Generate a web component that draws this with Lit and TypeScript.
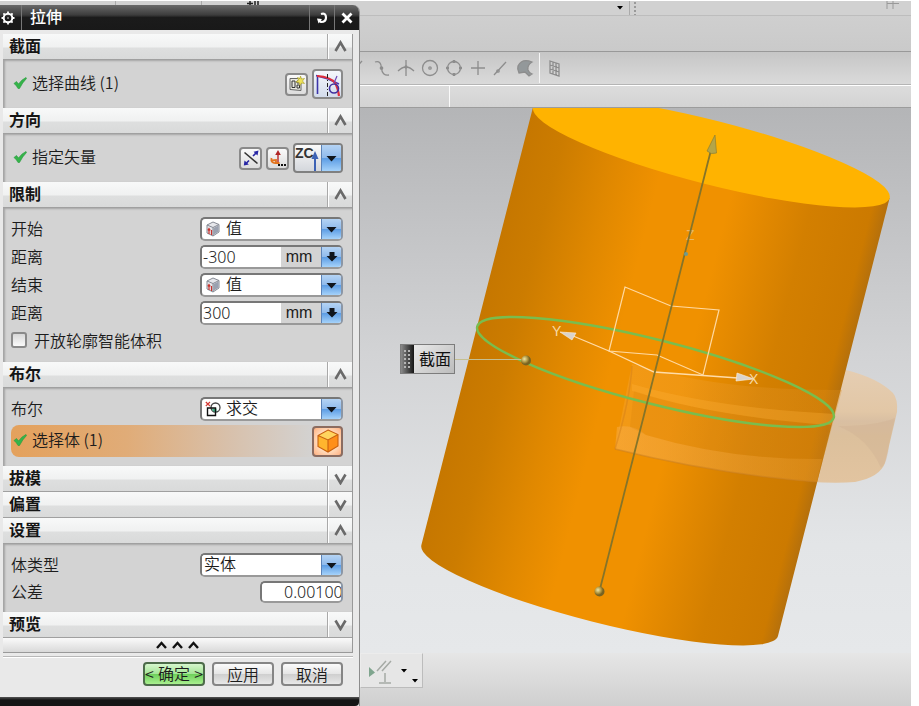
import { LitElement, html, svg, css, nothing, TemplateResult } from "lit";
import { customElement, property } from "lit/decorators.js";

const check = html`<svg class="check" viewBox="0 0 14 14" width="14" height="14" aria-hidden="true">
  <path d="M1 7.5 L3.5 5.5 L5.5 8 Q8.500 3.500 13 1.500 L13.500 2.500 Q9.500 6.500 6.500 12.500 L5 12.500 Q3.500 9.500 1 7.500Z" fill="#35b44a" stroke="#279a3b" stroke-width=".6"/>
</svg>`;

const cubeValue = html`<svg viewBox="0 0 16 16" width="16" height="16" aria-hidden="true">
  <path d="M8 1 L14 3.500 L14 11 L8 15 L2 12 L2 4Z" fill="#e6e7eb" stroke="#868a94"/>
  <path d="M8.500 7 L13.500 4.500 V10.500 L8.500 14Z" fill="#9aa1b0"/>
  <path d="M2 4 L8 6.500 L14 3.500 M8 6.500 V15" fill="none" stroke="#868a94"/>
  <path d="M4 13 V8 M2.800 9.300 L4 7.500 L5.200 9.300 M6.500 14 V9" fill="none" stroke="#c8322c" stroke-width="1.200"/>
</svg>`;

const intersect = html`<svg viewBox="0 0 16 16" width="16" height="16" aria-hidden="true">
  <circle cx="10.500" cy="6.500" r="4.500" fill="none" stroke="#444" stroke-width="1.300"/>
  <path d="M7 7.500 H11.500 V11 Q7 11 7 7.500Z" fill="#3fae83"/>
  <path d="M2.500 7 H10.500 V14.500 H2.500Z" fill="none" stroke="#111" stroke-width="1.400"/>
  <path d="M.8 1 L5 5 M5 1 L.8 5" stroke="#d43a34" stroke-width="1.200"/>
</svg>`;

const sketchIcon = html`<svg viewBox="0 0 18 18" width="18" height="18" aria-hidden="true">
  <path d="M2 3.500 L13 3.500 V15.500 L2 14.500Z" fill="#e9e9df" stroke="#666"/>
  <path d="M4 6 H7 V12.500 H4Z M9 6 H11.500 V8 H9Z M9 10 H11.500 V13 H9Z" fill="none" stroke="#333"/>
  <path d="M12.500 1 L13.500 4 L16.500 3.500 L14.500 6 L16.500 8.500 L13.500 8 L12 10.500 L11 7.500 L8 7 L10.500 5 L9.500 2.500 L12 3.500Z" fill="#eee25a" stroke="#a39a24" stroke-width=".6"/>
</svg>`;

const curveIcon = html`<svg viewBox="0 0 28 28" width="28" height="28" aria-hidden="true">
  <path d="M3.500 4 V23" fill="none" stroke="#3c35a8" stroke-width="1.600"/>
  <path d="M2 4.500 L14 8 L25 13" fill="none" stroke="#4a3bb0" stroke-width="1.600"/>
  <path d="M3 5 Q17 6 21 12 Q24 17 25 25" fill="none" stroke="#e02f3c" stroke-width="2.200"/>
  <circle cx="20" cy="17.500" r="4.500" fill="none" stroke="#41319e" stroke-width="1.600"/>
  <path d="M13.500 3 V25" stroke="#222" stroke-width="1" stroke-dasharray="4 2 1 2"/>
  <path d="M23 5 L20 12" stroke="#6d46b4" stroke-width="1.200"/>
</svg>`;

const reverseIcon = html`<svg viewBox="0 0 18 18" width="18" height="18" aria-hidden="true">
  <path d="M2.500 3.500 L15.500 14.500" stroke="#333" stroke-width="1.600"/>
  <path d="M4.500 14 L7 11.500 M11 7 L14 4" stroke="#2726a5" stroke-width="1.600"/>
  <path d="M16.500 1.500 L15.500 6.500 L11.500 2.800Z M1.800 16.500 L2.500 11.500 L6.800 15.500Z" fill="#2726a5"/>
</svg>`;

const vectorIcon = html`<svg viewBox="0 0 18 18" width="18" height="18" aria-hidden="true">
  <path d="M9 14 V5" stroke="#b33" stroke-width="1.500"/>
  <path d="M9 1 L11.800 6 H6.200Z" fill="#b02727"/>
  <path d="M2.500 9 Q1.500 14.500 7 14 L7 11 L3 11.500 M7 14 L10.500 14" fill="none" stroke="#e2731c" stroke-width="1.800"/>
  <path d="M9 16 h2 M12 16 h2 M15 16 h2" stroke="#111" stroke-width="2"/>
</svg>`;

const bodyIcon = html`<svg viewBox="0 0 26 26" width="26" height="26" aria-hidden="true">
  <path d="M13 2 L23 6.500 L13 12 L3 7.500Z" fill="#ffd45e"/>
  <path d="M3 7.500 L13 12 V24 L3 18.500Z" fill="#ffb52e"/>
  <path d="M23 6.500 L13 12 V24 L23 18Z" fill="#ff8f18"/>
  <path d="M13 2 L23 6.500 V18 L13 24 L3 18.500 V7.500Z M3 7.500 L13 12 L23 6.500 M13 12 V24" fill="none" stroke="#c9600f" stroke-width="1.100"/>
</svg>`;

const triangle = svg`<path d="M4.500 8 H14.500 L9.500 13.500Z" fill="#10151c"/>`;
const fatArrow = svg`<path d="M7.500 5 H12.500 V9 H15.500 L10 14.500 L4.500 9 H7.500Z" fill="#10151c"/>`;
const arrow = (shape: TemplateResult) =>
  html`<svg viewBox="0 0 20 20" width="20" height="20" aria-hidden="true">${shape}</svg>`;

const common = css`
  * { box-sizing: border-box; }
  button, input, select { font: inherit; color: inherit; margin: 0; }
  button { cursor: pointer; padding: 0; }
  svg { display: block; flex: none; }
`;

/** Collapsible group of the dialog: a titled bar and, when open, its rows. */
@customElement("dialog-section")
export class DialogSection extends LitElement {
  @property() heading = "";
  @property({ type: Boolean }) open = false;

  static styles = [common, css`
    :host { display: block; }
    .bar {
      display: flex; align-items: stretch; height: 26px;
      background: linear-gradient(#f8f9f9, #f0f1f1 52%, #dedfdf 56%, #d9dada);
      border-bottom: 1px solid #a0a0a0;
    }
    h2 {
      flex: 1; margin: 0; padding-left: 6px; font-size: 16px; line-height: 23px;
      font-weight: 700; color: #151515;
    }
    .toggle {
      width: 25px; border: 0; border-left: 1px solid #a9a9a9; background: none;
      box-shadow: inset 1px 0 #fff; display: grid; place-items: center;
    }
    .content {
      display: grid; gap: 4px; padding: 9px 9px 9px 8px; background: #d3d3d3;
      box-shadow: inset 2px 1px 2px #a4a4a4;
    }
  `];

  render() {
    const d = this.open ? "M1.500 11 L6.500 2.500 L11.500 11" : "M1.500 2.500 L6.500 11 L11.500 2.500";
    return html`
      <div class="bar">
        <h2>${this.heading}</h2>
        <button class="toggle" aria-expanded=${this.open} aria-label=${this.heading}
          @click=${() => (this.open = !this.open)}>
          <svg viewBox="0 0 13 13" width="13" height="13"><path d=${d} fill="none" stroke="#6a6a6a" stroke-width="2.600"/></svg>
        </button>
      </div>
      ${this.open ? html`<div class="content"><slot></slot></div>` : nothing}`;
  }
}

@customElement("extrude-dialog")
export class ExtrudeDialog extends LitElement {
  static styles = [common, css`
    :host {
      display: flex; flex-direction: column; background: #e9e9e9;
      border-right: 1px solid #8c8c8c; border-radius: 0 7px 0 0; overflow: hidden;
      font-size: 16px; line-height: 22px; color: #1c1c1c; font-weight: 350;
    }
    .title {
      display: flex; align-items: stretch; height: 25px; color: #fff; flex: none;
      background: linear-gradient(#6a6a6a, #3c3c3c 40%, #1b1b1b 50%, #191919);
    }
    .title h1 { flex: 1; margin: 0; padding-left: 8px; font-size: 16px; line-height: 22px; font-weight: 500; }
    .title button { border: 0; background: none; display: grid; place-items: center; width: 25px; border-left: 1px solid #777; }
    .title button.gear { width: 22px; border-left: 0; border-right: 1px solid #777; padding-right: 5px; }
    .groups { margin: 4px 6px 0 3px; border-right: 1px solid #999; }
    .row { display: flex; align-items: center; gap: 4px; height: 24px; }
    .row.tall { height: 30px; }
    .row.low { height: 22px; }
    .row.picked {
      height: 32px; border-radius: 8px;
      background: linear-gradient(90deg, #e4a15c, #e0ac78 35%, #d8c0aa 65%, #d3d3d3 92%);
    }
    .label { flex: 1; display: flex; align-items: center; gap: 5px; padding-bottom: 2px; }
    .tall .label, .picked .label { padding-bottom: 4px; }
    .check { margin: 2px 0 0 2px; }
    .tool {
      width: 23px; height: 23px; border: 2px solid #8a8a8a; border-radius: 4px; display: grid;
      place-items: center; background: linear-gradient(#fafafa, #dcdcdc);
    }
    .tool.big { width: 31px; height: 30px; background: linear-gradient(#f4f7fb, #d3dcec); }
    .tool.body { border-color: #8b6c60; background: radial-gradient(#fff2dc 30%, #ffb080); height: 31px; }
    .vector {
      display: flex; width: 50px; height: 30px; border: 2px solid #808080; border-radius: 4px;
      overflow: hidden; background: linear-gradient(#fafafa, #d4d7dc);
    }
    .vector button { border: 0; background: none; display: flex; }
    .axis { flex: 1; font: 700 14px/16px "Liberation Sans", sans-serif; color: #333; }
    .axis svg { margin: 6px 0 0 -3px; }
    .vector .drop, .drop {
      width: 20px; flex: none; display: grid; place-items: center; border: 0;
      background: linear-gradient(#b4d3f4, #8fbaec 50%, #5d9de4 52%, #a5d2fa);
      border-left: 1px solid #5d84b8;
    }
    .field {
      display: flex; align-items: stretch; width: 143px; height: 24px; background: #fff;
      border: 2px solid #777; border-right-color: #8b96a5; border-bottom-color: #999;
      border-radius: 5px; overflow: hidden;
    }
    .field > svg { margin: 2px 0 0 3px; }
    .field select {
      appearance: none; flex: 1; min-width: 0; border: 0; padding: 0 5px 3px; background: #fff;
      line-height: 17px;
    }
    .field.plain select { padding-left: 2px; }
    .field .drop { pointer-events: none; }
    .field button.drop { pointer-events: auto; }
    .field input {
      border: 0; padding: 0 1px; flex: 1; min-width: 0; background: #fff; outline: 0;
      font-family: "Noto Sans", sans-serif; font-weight: 300; color: #222;
    }
    .unit { width: 40px; padding-right: 4px; text-align: center; background: #d3d3d3; font: 400 16px/20px "Liberation Sans", sans-serif; }
    .tolerance { width: 83px; height: 22px; }
    .field.tolerance input { padding: 0 0 0 22px; }
    .tick { flex: none; appearance: none; width: 16px; height: 16px; border: 2px solid #8a8a8a; border-radius: 3px; background: linear-gradient(#d8d8d8, #fafafa); }
    .tick:checked { background: #35b44a; }
    .tickrow { display: flex; align-items: center; gap: 7px; padding-bottom: 2px; }
    .fold {
      display: flex; justify-content: center; align-items: center; gap: 5px; width: 100%; height: 15px;
      border: 0; border-bottom: 1px solid #999; background: linear-gradient(#fafafa, #d9d9d9);
    }
    .actions {
      display: flex; justify-content: flex-end; gap: 7px; margin: 3px 6px 0 3px; padding: 5px 10px 11px 0;
      border-top: 1px solid #b8b8b8; box-shadow: inset 0 1px #fff;
    }
    .actions button {
      width: 62px; height: 24px; border: 2px solid #858585; border-radius: 4px; line-height: 18px;
      background: linear-gradient(#fbfbfb, #e6e6e6 48%, #cfcfcf 52%, #e8e8e8); white-space: nowrap;
    }
    .actions .ok {
      display: flex; justify-content: space-between; border-color: #4d6b4a;
      background: linear-gradient(#d6f6cd, #a5e597 48%, #6fd05c 52%, #a9f08f);
    }
    .edge { flex: 1; min-height: 8px; background: linear-gradient(#555, #151515 3px); border-radius: 0 0 4px 0; }
  `];

  private combo(id: string, label: string, value: string, icon?: TemplateResult) {
    return html`<div class="row">
      <label class="label" for=${id}>${label}</label>
      <div class="field ${icon ? "" : "plain"}">
        ${icon ?? nothing}
        <select id=${id}><option>${value}</option></select>
        <span class="drop">${arrow(triangle)}</span>
      </div>
    </div>`;
  }

  private distance(id: string, value: string) {
    return html`<div class="row">
      <label class="label" for=${id}>距离</label>
      <div class="field">
        <input id=${id} .value=${value}>
        <span class="unit">mm</span>
        <button class="drop" aria-label="mm">${arrow(fatArrow)}</button>
      </div>
    </div>`;
  }

  render() {
    return html`
      <header class="title">
        <button class="gear" aria-label="设置">
          <svg viewBox="0 0 14 14" width="14" height="14">
            <circle cx="7" cy="7" r="4.300" fill="none" stroke="#fff" stroke-width="2"/>
            <path d="M7 .5 V3 M7 11 V13.500 M.5 7 H3 M11 7 H13.500 M2.400 2.400 L4 4 M10 10 L11.600 11.600 M11.600 2.400 L10 4 M4 10 L2.400 11.600" stroke="#fff" stroke-width="1.800"/>
            <circle cx="7" cy="7" r="1" fill="#999"/>
          </svg>
        </button>
        <h1>拉伸</h1>
        <button aria-label="重置">
          <svg viewBox="0 0 14 14" width="14" height="14">
            <path d="M6 3 Q11 1.500 11 6.500 Q11 11 6 11 L4 9.500" fill="none" stroke="#fff" stroke-width="2.200"/>
            <path d="M2 7.500 L7 8 L3.500 12.500Z" fill="#fff"/>
          </svg>
        </button>
        <button aria-label="关闭">
          <svg viewBox="0 0 14 14" width="14" height="14"><path d="M2.500 2.500 L11.500 11.500 M11.500 2.500 L2.500 11.500" stroke="#fff" stroke-width="2.800"/></svg>
        </button>
      </header>

      <div class="groups">
        <dialog-section heading="截面" open>
          <div class="row tall">
            <span class="label">${check}选择曲线 (1)</span>
            <button class="tool" aria-label="草图">${sketchIcon}</button>
            <button class="tool big" aria-label="曲线">${curveIcon}</button>
          </div>
        </dialog-section>
        <dialog-section heading="方向" open>
          <div class="row tall">
            <span class="label">${check}指定矢量</span>
            <button class="tool" aria-label="反向">${reverseIcon}</button>
            <button class="tool" aria-label="矢量">${vectorIcon}</button>
            <div class="vector">
              <button class="axis">ZC<svg viewBox="0 0 8 20" width="8" height="20" aria-hidden="true">
                <path d="M4 6 V20" stroke="#3d62b5" stroke-width="2"/><path d="M4 0 L7.500 8 H.5Z" fill="#3d62b5"/></svg></button>
              <button class="drop" aria-label="矢量类型">${arrow(triangle)}</button>
            </div>
          </div>
        </dialog-section>
        <dialog-section heading="限制" open>
          ${this.combo("start", "开始", "值", cubeValue)}
          ${this.distance("start-distance", "-300")}
          ${this.combo("end", "结束", "值", cubeValue)}
          ${this.distance("end-distance", "300")}
          <div class="row">
            <label class="tickrow"><input class="tick" type="checkbox">开放轮廓智能体积</label>
          </div>
        </dialog-section>
        <dialog-section heading="布尔" open>
          ${this.combo("boolean", "布尔", "求交", intersect)}
          <div class="row picked">
            <span class="label">${check}选择体 (1)</span>
            <button class="tool big body" aria-label="体">${bodyIcon}</button>
          </div>
        </dialog-section>
        <dialog-section heading="拔模"></dialog-section>
        <dialog-section heading="偏置"></dialog-section>
        <dialog-section heading="设置" open>
          ${this.combo("body-type", "体类型", "实体")}
          <div class="row low">
            <label class="label" for="tolerance">公差</label>
            <div class="field tolerance"><input id="tolerance" .value=${"0.00100"}></div>
          </div>
        </dialog-section>
        <dialog-section heading="预览"></dialog-section>
        <button class="fold" aria-label="收起">
          ${[0, 1, 2].map(() => html`<svg viewBox="0 0 11 8" width="11" height="8"><path d="M1 7 L5.500 2 L10 7" fill="none" stroke="#111" stroke-width="2.400"/></svg>`)}
        </button>
      </div>

      <div class="actions">
        <button class="ok"><span>&lt;</span><span>确定</span><span>&gt;</span></button>
        <button>应用</button>
        <button>取消</button>
      </div>
      <div class="edge"></div>`;
  }
}

/** 3D view with the extruded cylinder, the profile circle and the datum axes. */
@customElement("model-view")
export class ModelView extends LitElement {
  static styles = [common, css`
    :host { display: block; position: relative; overflow: hidden; }
    .scene { position: absolute; inset: 0; }
    .axis-name { font: 400 14px "Liberation Sans", sans-serif; fill: #f6d9a4; }
    .axis-name.dim { fill: #e8b766; }
    .tag {
      position: absolute; left: 40px; top: 236px; display: flex; width: 55px; height: 30px;
      border: 1px solid #7c7c7c; background: linear-gradient(135deg, #f2f2f2, #bcbcbc);
      font-size: 16px; line-height: 26px; color: #111; padding: 0;
    }
    .grip { width: 13px; height: 28px; background: linear-gradient(90deg, #8a8a8a, #151515); margin-right: 5px; }
  `];

  render() {
    return html`
      <svg class="scene" viewBox="360 108 551 545" width="551" height="545" role="img" aria-label="拉伸预览">
        <defs>
          <linearGradient id="side" gradientUnits="userSpaceOnUse" x1="-184" y1="0" x2="184" y2="0">
            <stop offset="0" stop-color="#c67700"/><stop offset=".1" stop-color="#cc7c00"/>
            <stop offset=".25" stop-color="#e08800"/><stop offset=".38" stop-color="#f09100"/>
            <stop offset=".58" stop-color="#f09100"/><stop offset=".7" stop-color="#e08700"/>
            <stop offset=".8" stop-color="#d37f00"/><stop offset=".96" stop-color="#cc7a00"/>
            <stop offset="1" stop-color="#b5700c"/>
          </linearGradient>
          <linearGradient id="ghost" x1="0" y1="0" x2="0" y2="1">
            <stop offset="0" stop-color="#e6cfb5"/><stop offset=".42" stop-color="#e2c7a6"/>
            <stop offset=".5" stop-color="#d9bfa2"/><stop offset=".62" stop-color="#dcc09c"/><stop offset="1" stop-color="#e2c4a0"/>
          </linearGradient>
          <linearGradient id="inner" gradientUnits="userSpaceOnUse" x1="620" y1="0" x2="835" y2="0">
            <stop offset="0" stop-color="#f8ad48"/><stop offset="1" stop-color="#dd8d1c"/>
          </linearGradient>
          <radialGradient id="ball" cx=".35" cy=".35"><stop offset="0" stop-color="#eee6a8"/><stop offset=".6" stop-color="#b39a45"/><stop offset="1" stop-color="#776322"/></radialGradient>
        </defs>
        <path d="M780 360 L846 370 Q878 378 893 393 Q898 399 897 412 L885 463 Q880 477 855 482 Q830 484 780 480Z" fill="url(#ghost)"/>
        <path d="M838 426 Q868 438 881 468 Q888 462 889 444 L895 418 Q875 426 838 426Z" fill="#cfb294" opacity=".4"/>
        <g transform="translate(655.500 371.500) rotate(14.300)">
          <path d="M-184 -226 V226 A184 32 0 0 0 184 226 V-226Z" fill="url(#side)"/>
          <ellipse cx="0" cy="-226" rx="184" ry="32" fill="#ffb300"/>
        </g>
        <g>
          <path d="M632 364 Q720 391 842 390 L817 482 Q715 474 615 449 Z" fill="url(#inner)" opacity=".3"/>
          <path d="M632 384 Q715 408 835 414 L831 425 Q710 416 632 391Z" fill="#ffb33c" opacity=".3"/>
          <path d="M617 427 Q634 424 646 435 Q730 460 822 459 L817 482 Q715 474 615 449Z" fill="url(#inner)" opacity=".5"/>
          <path d="M634 391 Q710 416 829 426 L821 459 Q730 460 646 435 L630 427Z" fill="#c57300" opacity=".14"/>
          <path d="M615 449 Q715 474 817 482" fill="none" stroke="#c87e22" stroke-width="1.500" opacity=".5"/>
          <path d="M632 366 Q630 400 615 449" fill="none" stroke="#d3801a" stroke-width="1.500" opacity=".5"/>
        </g>
        <ellipse cx="0" cy="0" rx="184" ry="32" transform="translate(655.500 372) rotate(14.300)" fill="none" stroke="#79bd4e" stroke-width="2.400"/>
        <path d="M609 351 L625 287 L671 306 L719 310 L703 375 L657 355 Z" fill="none" stroke="#ffd9a0" stroke-width="1.200"/>
        <path d="M566 333 L609 351 L654 372 L738 378" fill="none" stroke="#ffdca8" stroke-width="1.300"/>
        <path d="M560 332 L576 333 L572 340Z M754 379 L737 373 L736 381Z" fill="#d9d3cc" stroke="#fff0da" stroke-width=".6"/>
        <text class="axis-name" x="552" y="336">Y</text>
        <text class="axis-name" x="749" y="384">X</text>
        <text class="axis-name dim" x="686" y="240">Z</text>
        <path d="M455 359.500 H526" stroke="#c5bf91"/>
        <path d="M599.500 591 L711 150" stroke="#857429" stroke-width="1.800"/>
        <path d="M715 135 L716.500 153 Q711 155 707 151Z" fill="#b3a549" stroke="#85782f" stroke-width=".6"/>
        <circle cx="686" cy="254" r="2" fill="#6d9a90"/>
        <circle cx="526" cy="360.500" r="5" fill="url(#ball)"/>
        <circle cx="599.500" cy="591.500" r="5" fill="url(#ball)"/>
      </svg>
      <button class="tag"><svg class="grip" viewBox="0 0 13 28" aria-hidden="true">
        <path d="M4 5 V25 M8 5 V25" stroke="#b5b5b5" stroke-width="2" stroke-dasharray="2 2"/></svg>截面</button>`;
  }
}

const snapIcons = [
  svg`<path d="M4 18 L16 5" />`,
  svg`<path d="M5 6 Q11 4 11.500 12 Q12 20 19 19"/><circle cx="11.500" cy="12" r="1.200"/>`,
  svg`<path d="M4 15 Q12 7 20 15 M12 4 V20"/><circle cx="12" cy="11" r="1"/>`,
  svg`<circle cx="12" cy="12" r="7.500"/><circle cx="12" cy="12" r="1.200"/>`,
  svg`<circle cx="12" cy="12" r="6.500"/><path d="M12 4 v3 M12 17 v3 M4 12 h3 M17 12 h3" stroke-width="2.500"/>`,
  svg`<path d="M12 5 V19 M5 12 H19"/>`,
  svg`<path d="M4 19 L16 6"/><circle cx="8" cy="15" r="1.200"/>`,
  svg`<path d="M4 10 Q8 2 18 6 Q13 9 14 14 Q15 17 18 18 L15 20 L11 16 L5 17 Q3 13 4 10Z" fill="#93989a"/>`,
];

@customElement("app-root")
export class AppRoot extends LitElement {
  static styles = [common, css`
    :host {
      --dialog-width: 360px;
      display: grid; grid-template: minmax(100vh, auto) / minmax(0, 1fr); padding: 0 8px 0 0; background: #fff;
      font-family: "Noto Sans CJK SC", "Liberation Sans", sans-serif;
    }
    .workspace, extrude-dialog { grid-area: 1 / 1; }
    .workspace { display: flex; flex-direction: column; border-top: 1px solid #fff; background: #ccc; }
    extrude-dialog { width: var(--dialog-width); margin-top: 5px; z-index: 1; }
    .menu { display: flex; height: 15px; background: #d1d1d1; border-bottom: 1px solid #bdbdbd; }
    .menu span { border-right: 1px solid #aaa; }
    .m1 { width: 116px; }
    .m2 { width: 86px; }
    .m3 { width: 428px; display: flex; justify-content: space-between; padding: 0 4px 0 45px; }
    .rest { flex: 1; display: flex; justify-content: space-between; padding: 0 10px 0 3px; }
    .ribbon { height: 36px; background: linear-gradient(#cfcfcf, #cacaca); border-bottom: 1px solid #999; }
    .snap {
      display: flex; align-items: center; height: 33px; padding-left: 346px;
      background: linear-gradient(#c6c6c6, #dadada); border-bottom: 1px solid #b5b5b5;
    }
    .snap svg { fill: none; stroke: #8d8d8d; stroke-width: 1.300; }
    .rule { width: 1px; height: 30px; background: #f6f6f6; margin: 0 3px 0 1px; }
    .prompt { height: 23px; display: flex; padding-left: var(--dialog-width); background: linear-gradient(#dcdcdc, #d3d3d3); border-top: 1px solid #fff; border-bottom: 1px solid #9c9c9c; }
    .prompt span { width: 90px; border-right: 1px solid #fafafa; }
    .stage { flex: 1; display: grid; padding-left: var(--dialog-width); background: linear-gradient(#b4b5b7, #d2d3d5 45%, #e3e5e7 80%, #e6e8ea); }
    .status { height: 53px; padding-left: var(--dialog-width); background: linear-gradient(#e6e6e6, #cfcfcf); }
    .dock { width: 63px; height: 35px; background: #e6e6e6; border: 1px solid #ececec; border-right-color: #bcbcbc; border-bottom-color: #bcbcbc; }
  `];

  render() {
    return html`
      <main class="workspace">
        <div class="menu">
          <span class="m1"></span><span class="m2"></span>
          <span class="m3">
            <svg viewBox="0 0 14 4" width="14" height="4"><path d="M0 2.500 H6 M3 0 V4 M8 0 V4 M11 0 V4" stroke="#222" stroke-width="1.500"/></svg>
            <svg viewBox="0 0 10 14" width="10" height="14"><path d="M2 5 H8 L5 8.500Z" fill="#000"/></svg>
          </span>
          <div class="rest">
            <svg viewBox="0 0 4 14" width="4" height="14"><path d="M2 1 V14" stroke="#999" stroke-width="2" stroke-dasharray="2 2"/></svg>
            <svg viewBox="0 0 16 10" width="16" height="10"><path d="M2 0 V8 M8 0 V8 M2 2.500 H14" stroke="#999" fill="none"/></svg>
          </div>
        </div>
        <div class="ribbon"></div>
        <div class="snap">
          ${snapIcons.map((i) => html`<svg viewBox="0 0 24 24" width="24" height="24" aria-hidden="true">${i}</svg>`)}
          <span class="rule"></span>
          <svg viewBox="0 0 24 24" width="24" height="24" aria-hidden="true"><path d="M7 5 L16 8 V20 L7 17Z M10 6 V18 M13 7 V19 M7 9 L16 12 M7 13 L16 16"/></svg>
        </div>
        <div class="prompt"><span></span></div>
        <div class="stage"><model-view></model-view></div>
        <div class="status">
          <div class="dock">
            <svg viewBox="0 0 60 33" width="60" height="33" aria-hidden="true">
              <path d="M8 13 L14 18.500 L8 23Z" fill="#7fa58e"/>
              <path d="M16 17 L25 7 M21 17 L30 7 M24 19 V28 M18 29 H30" fill="none" stroke="#a5aaa5" stroke-width="1.500"/>
              <path d="M40 15 H46 L43 18.500Z M51 25 H57 L54 28.500Z" fill="#000"/>
            </svg>
          </div>
        </div>
      </main>
      <extrude-dialog></extrude-dialog>`;
  }
}
